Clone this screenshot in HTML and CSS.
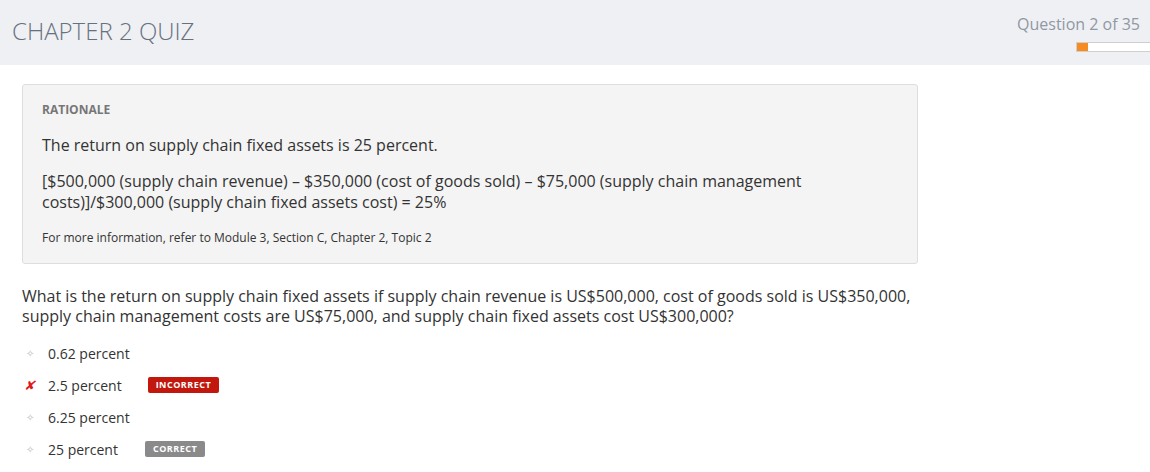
FILE: index.html
```html
<!DOCTYPE html>
<html lang="en">
<head>
<meta charset="utf-8">
<title>Chapter 2 Quiz</title>
<link rel="stylesheet" href="styles.css">
</head>
<body>
<header class="header">
  <h1 class="title">CHAPTER 2 QUIZ</h1>
  <div class="progress-wrap">
    <div class="counter">Question 2 of 35</div>
    <div class="progress"><div class="progress-fill" style="width:11px"></div></div>
  </div>
</header>
<main class="main">
  <section class="rationale">
    <div class="rationale-label">RATIONALE</div>
    <p class="rationale-text">The return on supply chain fixed assets is 25 percent.</p>
    <p class="rationale-text">[$500,000 (supply chain revenue) – $350,000 (cost of goods sold) – $75,000 (supply chain management costs)]/$300,000 (supply chain fixed assets cost) = 25%</p>
    <p class="rationale-ref">For more information, refer to Module 3, Section C, Chapter 2, Topic 2</p>
  </section>
  <p class="question">What is the return on supply chain fixed assets if supply chain revenue is US$500,000, cost of goods sold is US$350,000, supply chain management costs are US$75,000, and supply chain fixed assets cost US$300,000?</p>
  <ul class="options">
    <li class="option"><span class="marker dot">&#10023;</span><span class="opt-text">0.62 percent</span></li>
    <li class="option"><span class="marker cross">&#10008;</span><span class="opt-text">2.5 percent</span><span class="badge badge-incorrect">INCORRECT</span></li>
    <li class="option"><span class="marker dot">&#10023;</span><span class="opt-text">6.25 percent</span></li>
    <li class="option"><span class="marker dot">&#10023;</span><span class="opt-text">25 percent</span><span class="badge badge-correct">CORRECT</span></li>
  </ul>
</main>
</body>
</html>
```
FILE: styles.css
```css
* { box-sizing: border-box; }
html, body { margin: 0; padding: 0; }
body {
  font-family: "Open Sans", "Liberation Sans", sans-serif;
  color: #333;
  background: #fff;
  width: 1150px;
  overflow: hidden;
}
.header {
  background: #eff0f4;
  height: 65px;
  display: flex;
  justify-content: space-between;
  align-items: flex-start;
  padding: 0 0 0 12px;
}
.title {
  margin: 15px 0 0 0;
  font-weight: 300;
  font-size: 24px;
  line-height: 32px;
  color: #67717d;
  letter-spacing: 0;
}
.progress-wrap {
  display: flex;
  flex-direction: column;
  align-items: flex-end;
}
.counter {
  margin-top: 13px;
  margin-right: 10px;
  font-size: 16px;
  line-height: 22px;
  color: #8f98a3;
}
.progress {
  margin-top: 7px;
  width: 74px;
  height: 10px;
  background: #fff;
  border: 1px solid #cfcfcf;
  border-right: none;
  display: flex;
}
.progress-fill {
  height: 100%;
  background: #f68b1f;
}
.main {
  padding: 19px 0 0 22px;
  width: 918px;
}
.rationale {
  background: #f4f4f4;
  border: 1px solid #dedede;
  border-radius: 3px;
  padding: 17px 19px 17px 19px;
}
.rationale-label {
  font-size: 12px;
  font-weight: 700;
  color: #777;
  line-height: 16px;
}
.rationale-text {
  margin: 17px 0 0 0;
  font-size: 16px;
  line-height: 21px;
  color: #333;
  padding-right: 80px;
}
.rationale-text + .rationale-text { margin-top: 15px; }
.rationale-ref {
  margin: 17px 0 0 0;
  font-size: 12px;
  line-height: 16px;
  color: #333;
}
.question {
  margin: 22px 0 0 0;
  font-size: 16px;
  line-height: 20px;
  color: #333;
}
.options {
  list-style: none;
  margin: 11px 0 0 0;
  padding: 0;
}
.option {
  display: flex;
  align-items: center;
  height: 32px;
  font-size: 14px;
  color: #333;
}
.marker {
  width: 26px;
  flex: none;
  padding-left: 4px;
  font-size: 10px;
  color: #bdbdbd;
}
.marker.cross {
  font-size: 13px;
  color: #e0181b;
  font-style: italic;
  padding-left: 2px;
}
.opt-text { flex: none; }
.badge {
  display: inline-block;
  font-size: 9px;
  font-weight: 700;
  letter-spacing: 0.5px;
  color: #fff;
  border-radius: 2px;
  line-height: 16px;
  height: 16px;
  padding: 0 8px;
}
.badge-incorrect {
  background: #c2170c;
  margin-left: 26px;
}
.badge-correct {
  background: #8a8a8a;
  margin-left: 27px;
}
```
